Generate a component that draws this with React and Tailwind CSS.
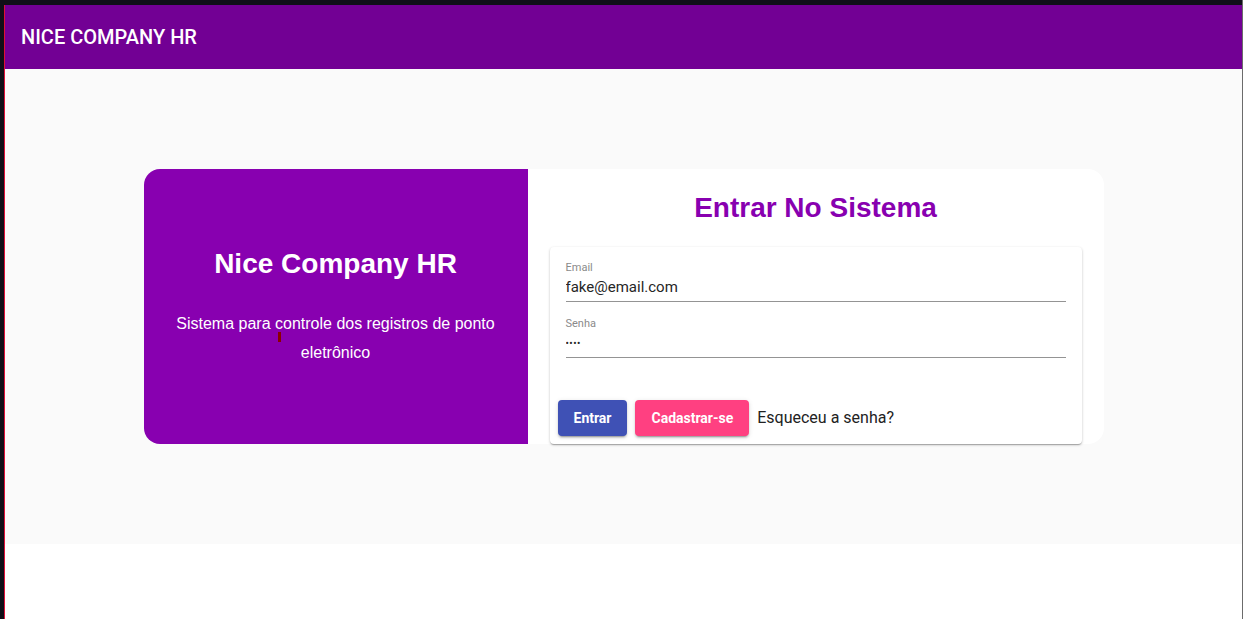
import React from 'react';

export default function App() {
  return (
    <div className="h-screen w-full bg-[#100f18] pt-[5px] pl-[4px] border-r border-[#6b6b6b] flex flex-col" style={{ fontFamily: 'Roboto, "Liberation Sans", sans-serif' }}>
      <div className="flex-1 flex flex-col border-l border-[#e0103a] bg-white">
        {/* App bar */}
        <header className="h-16 bg-[#720094] flex items-center pl-4">
          <h1 className="text-white text-[20px] font-medium">NICE COMPANY HR</h1>
        </header>

        {/* Login area */}
        <main className="bg-[#fafafa] py-[100px]">
          <div className="w-[960px] h-[275px] mx-auto flex">
            {/* Left panel */}
            <div
              className="relative w-[384px] bg-[#8800b0] rounded-l-2xl flex flex-col items-center justify-center px-8 text-white text-center"
              style={{ fontFamily: '"Liberation Sans", Arial, sans-serif' }}
            >
              <h2 className="text-[28px] font-bold leading-[34px]">Nice Company HR</h2>
              <p className="mt-[28px] text-[16px] leading-[29px]">Sistema para controle dos registros de ponto eletrônico</p>
              <span className="absolute left-[134px] top-[163px] w-[3px] h-[10px] bg-[#8b0000]"></span>
            </div>

            {/* Right panel */}
            <div className="flex-1 bg-white rounded-r-2xl px-[22px] flex flex-col">
              <h2
                className="mt-[22px] text-center text-[28px] font-bold leading-[34px] text-[#8800b0]"
                style={{ fontFamily: '"Liberation Sans", Arial, sans-serif' }}
              >
                Entrar No Sistema
              </h2>

              <div className="mt-[22px] flex-1 bg-white rounded shadow-[0_1px_3px_rgba(0,0,0,0.2),0_1px_1px_rgba(0,0,0,0.14),0_2px_1px_-1px_rgba(0,0,0,0.12)] flex flex-col">
                <div className="px-4 pt-[15px]">
                  <label className="block text-[11px] leading-[12px] text-[#8a8a8a]">Email</label>
                  <div className="pt-[4px] pb-[4px] border-b border-[#949494]">
                    <input
                      readOnly
                      value="fake@email.com"
                      className="block w-full bg-transparent outline-none text-[15px] leading-[19px] h-[19px] text-[#262626]"
                    />
                  </div>

                  <label className="block mt-[16px] text-[11px] leading-[12px] text-[#8a8a8a]">Senha</label>
                  <div className="pt-[4px] pb-[4px] border-b border-[#949494]">
                    <input
                      readOnly
                      type="password"
                      value="1234"
                      className="block w-full bg-transparent outline-none text-[10px] leading-[19px] h-[19px] text-[#262626] tracking-[0.5px]"
                    />
                  </div>
                </div>

                <div className="mt-[42px] px-2 flex items-center gap-2">
                  <button className="h-9 px-4 rounded bg-[#3f51b5] text-white text-[14px] font-bold shadow-[0_3px_1px_-2px_rgba(0,0,0,0.2),0_2px_2px_rgba(0,0,0,0.14),0_1px_5px_rgba(0,0,0,0.12)]">
                    Entrar
                  </button>
                  <button className="h-9 px-4 rounded bg-[#ff4081] text-white text-[14px] font-bold shadow-[0_3px_1px_-2px_rgba(0,0,0,0.2),0_2px_2px_rgba(0,0,0,0.14),0_1px_5px_rgba(0,0,0,0.12)]">
                    Cadastrar-se
                  </button>
                  <span className="text-[16px] text-[#222222]">Esqueceu a senha?</span>
                </div>
              </div>
            </div>
          </div>
        </main>

        <div className="flex-1 bg-white"></div>
      </div>
    </div>
  );
}
